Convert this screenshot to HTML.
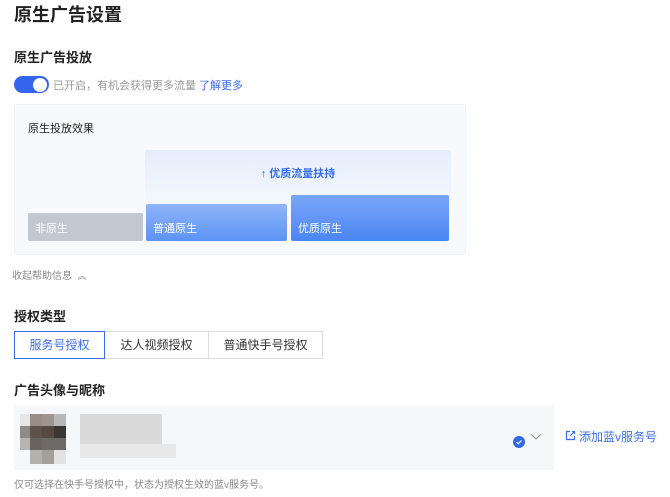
<!DOCTYPE html>
<html><head><meta charset="utf-8"><style>
*{margin:0;padding:0;box-sizing:border-box}
body{width:670px;height:497px;background:#fff;font-family:"Liberation Sans","Noto Sans CJK SC",sans-serif;position:relative;overflow:hidden;color:#222}
.a{position:absolute;white-space:nowrap}
.lbl{color:#fff;font-size:11px}
</style></head><body>
<div class="a" style="left:14px;top:1px;font-size:18px;font-weight:bold;color:#222">原生广告设置</div>
<div class="a" style="left:14px;top:47px;font-size:13px;font-weight:bold">原生广告投放</div>
<div class="a" style="left:14px;top:76px;width:35px;height:17px;border-radius:9px;background:#3465ee"></div>
<div class="a" style="left:33px;top:77.5px;width:14px;height:14px;border-radius:50%;background:#fff"></div>
<div class="a" style="left:53px;top:77px;font-size:11px;color:#999">已开启，有机会获得更多流量 <span style="color:#3a6ee8">了解更多</span></div>
<div class="a" style="left:14px;top:104px;width:452px;height:151px;background:#f7f9fc;border:1px solid #eef1f5;border-radius:3px"></div>
<div class="a" style="left:28px;top:120px;font-size:11px;color:#222">原生投放效果</div>
<div class="a" style="left:145px;top:150px;width:306px;height:60px;background:linear-gradient(#e6eefb,#f5f8fd)"></div>
<div class="a" style="left:145px;top:165px;width:306px;text-align:center;font-size:11px;color:#3a6ee8;font-weight:bold">↑ 优质流量扶持</div>
<div class="a" style="left:28px;top:213px;width:115px;height:28px;background:#c2c7d0;border-radius:2px"></div>
<div class="a lbl" style="left:35px;top:220px">非原生</div>
<div class="a" style="left:146px;top:204px;width:141px;height:37px;background:linear-gradient(#8fb5f9,#5c93f4);border-radius:2px"></div>
<div class="a lbl" style="left:153px;top:220px">普通原生</div>
<div class="a" style="left:291px;top:195px;width:158px;height:46px;background:linear-gradient(#7aa6f8,#4b86f3);border-radius:2px"></div>
<div class="a lbl" style="left:298px;top:220px">优质原生</div>
<div class="a" style="left:12px;top:267px;font-size:10px;color:#888">收起帮助信息 &nbsp;<span style="font-size:9px">︽</span></div>
<div class="a" style="left:14px;top:306px;font-size:13px;font-weight:bold">授权类型</div>
<div class="a" style="left:14px;top:331px;width:91px;height:28px;border:1px solid #3a6ee8;color:#3a6ee8;font-size:12px;text-align:center;line-height:26px;z-index:2">服务号授权</div>
<div class="a" style="left:104px;top:331px;width:105px;height:28px;border:1px solid #ddd;font-size:12px;text-align:center;line-height:26px;color:#333">达人视频授权</div>
<div class="a" style="left:208px;top:331px;width:115px;height:28px;border:1px solid #ddd;font-size:12px;text-align:center;line-height:26px;color:#333">普通快手号授权</div>
<div class="a" style="left:14px;top:380px;font-size:13px;font-weight:bold">广告头像与昵称</div>
<div class="a" style="left:14px;top:406px;width:540px;height:64px;background:#f6f7f9"></div>
<svg class="a" style="left:20px;top:414px" width="170" height="52">
<g>
<rect x="0" y="0" width="10" height="12" fill="#e6e6e6"/><rect x="10" y="0" width="12" height="12" fill="#9a8c86"/><rect x="22" y="0" width="12" height="12" fill="#9f9490"/><rect x="34" y="0" width="12" height="12" fill="#b8b8b8"/>
<rect x="0" y="12" width="10" height="12" fill="#8e8a87"/><rect x="10" y="12" width="12" height="12" fill="#5e514c"/><rect x="22" y="12" width="12" height="12" fill="#574844"/><rect x="34" y="12" width="12" height="12" fill="#3a3735"/>
<rect x="0" y="24" width="10" height="12" fill="#b5b4b3"/><rect x="10" y="24" width="12" height="12" fill="#696360"/><rect x="22" y="24" width="24" height="12" fill="#6e6a67"/>
<rect x="10" y="36" width="12" height="14" fill="#b3b0ad"/><rect x="22" y="36" width="12" height="14" fill="#a3a09c"/><rect x="34" y="36" width="12" height="14" fill="#e2e2e2"/>
<rect x="60" y="0" width="82" height="30" fill="#dadada"/><rect x="60" y="30" width="96" height="14" fill="#e8e8e8"/>
</g></svg>
<svg class="a" style="left:513px;top:436px" width="12" height="12"><circle cx="6" cy="6" r="6" fill="#2f6ae6"/><path d="M3.5 6.2l1.7 1.6 3.3-3.4" stroke="#fff" stroke-width="1.2" fill="none"/></svg>
<svg class="a" style="left:530px;top:432px" width="12" height="10"><path d="M1 2l5 5 5-5" stroke="#999" stroke-width="1.2" fill="none"/></svg>
<svg class="a" style="left:565px;top:430px" width="11" height="11"><path d="M5 1.5H1.5v8h8V6M7 1.5h2.5V4M9.5 1.5L5 6" stroke="#3a6ee8" stroke-width="1.2" fill="none"/></svg>
<div class="a" style="left:579px;top:428px;font-size:12px;color:#3a6ee8">添加蓝v服务号</div>
<div class="a" style="left:14px;top:476px;font-size:10px;color:#888">仅可选择在快手号授权中，状态为授权生效的蓝v服务号。</div>
</body></html>
